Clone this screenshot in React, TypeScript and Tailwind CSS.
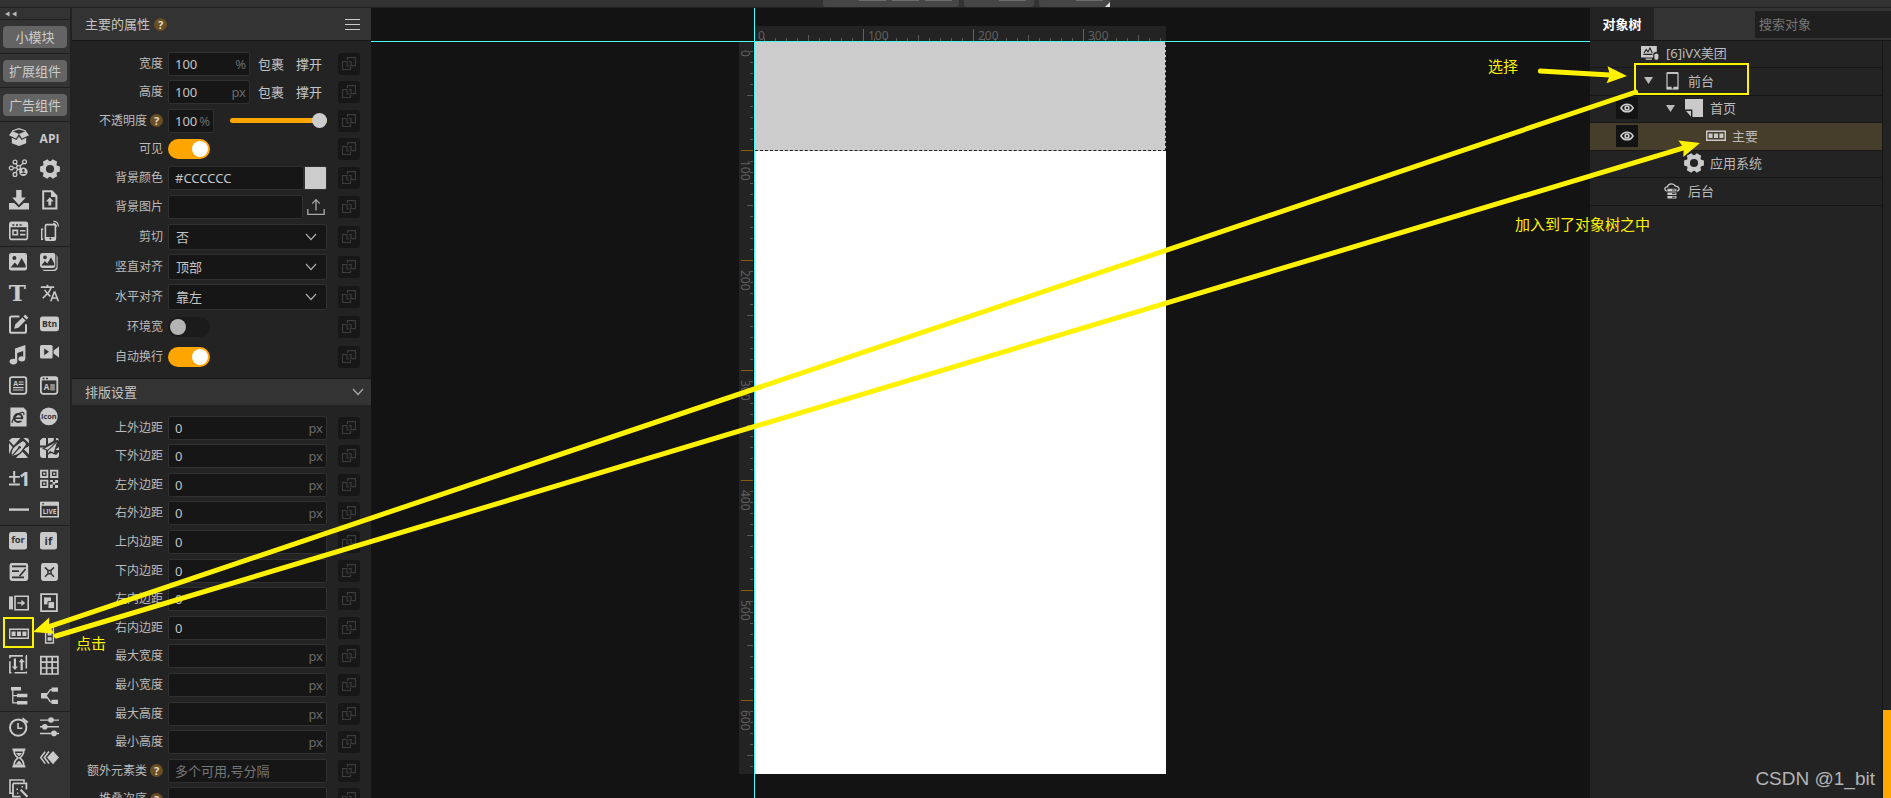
import React from "react";
import { MdTranslate } from "react-icons/md";

const L = "#cacaca";
const D = "#333333";

function Ico({ children }: { children: React.ReactNode }) {
  return (
    <svg viewBox="0 0 20 20" className="block size-5 overflow-visible" fill={L} aria-hidden="true">
      {children}
    </svg>
  );
}

function IcoText({ x, y, size, fill, children, serif }: { x: number; y: number; size: number; fill: string; children: string; serif?: boolean }) {
  return (
    <text x={x} y={y} fontSize={size} fontWeight="bold" fill={fill} textAnchor="middle" className={serif ? "font-['DejaVu_Serif',serif]" : "font-['Open_Sans',sans-serif]"}>
      {children}
    </text>
  );
}

function GearShape() {
  return (
    <g>
      <circle cx="10" cy="10" r="6" fill="none" stroke={L} strokeWidth="3.8" />
      {[30, 90, 150].map((a) => (
        <g key={a} transform={`rotate(${a} 10 10)`}>
          <path d="M6.600 3.400 7.400.100h5.200l.800 3.300zM6.600 16.600l.800 3.300h5.200l.800-3.300z" />
        </g>
      ))}
    </g>
  );
}

function RowShape() {
  return (
    <g>
      <path d="M.7 5.2h18.6v9H.7z" fill="none" stroke={L} strokeWidth="1.4" />
      <path d="M2.6 7.6h4v4.4h-4zM8 7.6h4v4.4H8zM13.4 7.6h4v4.4h-4z" />
    </g>
  );
}

const stroke = { fill: "none", stroke: L, strokeWidth: 1.6 } as const;
const dark = { fill: "none", stroke: D, strokeWidth: 1.4 } as const;

type Tool = { name: string; art: React.ReactNode };

const toolGroups: Tool[][] = [
  [
    { name: "模型", art: <Ico><path d="M0 7.200 3.200 3 10 6 7 10.400zM20 7.200 16.800 3 10 6l3 4.400z" /><path d="M3.200 3 10 .600 16.800 3" fill="none" stroke={L} strokeWidth="1.300" /><path d="M2.800 9.800 7.400 12 10 8.400l2.600 3.600 4.600-2.200v5.400L10 18l-7.200-2.800z" /></Ico> },
    { name: "API", art: <Ico><IcoText x={9.5} y={15} size={12} fill={L}>API</IcoText></Ico> },
    { name: "网络", art: <Ico><g {...stroke} strokeWidth="1.3"><circle cx="6" cy="3" r="1.9" /><circle cx="15.5" cy="2.8" r="1.9" /><circle cx="2.3" cy="9" r="1.9" /><circle cx="9.6" cy="8.6" r="1.9" /><circle cx="6" cy="15.4" r="1.9" /><path d="m7 4.6 1.6 2.4m2.4.1 3.2-2.8M4.2 8.9h3.5m1 1.4-1.8 3.4" /></g><circle cx="14.4" cy="12.8" r="4.2" /><circle cx="14.4" cy="11.4" r="1.3" fill={D} /><path d="M11.9 15c.6-2 4.4-2 5 0z" fill={D} /></Ico> },
    { name: "设置", art: <Ico><GearShape /></Ico> },
    { name: "下载", art: <Ico><path d="M7.2 0h5.4v7.6h4.2L9.9 15 3.2 7.6h4z" /><path d="M0 13h5.2l4.7 4.4 4.8-4.4H20v6.6H0z" /></Ico> },
    { name: "上传", art: <Ico><path d="M3.2 1.2h8.6l4.6 4.6v12.6H3.2z" fill="none" stroke={L} strokeWidth="2" /><path d="M11 .8 17 7h-6zM9.8 7.2l3.9 4.4h-2.5v4H8.4v-4H5.9z" /></Ico> },
    { name: "窗口", art: <Ico><rect x=".8" y="1.4" width="17.6" height="17" rx="2" {...stroke} /><path d="M1 2h17.2v4.2H1z" /><path d="M3.4 3.2h2v1.6h-2zM7 3.2h2v1.6H7zM10.6 3.2h2v1.6h-2z" fill={D} /><path d="M4 9.4h4.4v4.4H4z" {...stroke} /><path d="M11 9h5.4v1.6H11zM11 12.8h5.4v1.6H11z" /></Ico> },
    { name: "移动端", art: <Ico><rect x="5.4" y="3.6" width="10" height="15.6" rx="1.4" {...stroke} /><path d="M5.4 16h10v3h-10zM1 7.4h2.2v1.5h-.8v8.6h.8V19H1z" /><circle cx="10.4" cy="17.6" r="1" fill={D} /><path d="M13 2.6c2 0 3.4 1.4 3.4 3.4M13.4.4c3 0 5 2 5 5" {...stroke} strokeWidth="1.2" /></Ico> },
  ],
  [
    { name: "图片", art: <Ico><rect x="0" y="1" width="18" height="17.6" rx="2.4" /><circle cx="5.4" cy="6" r="2" fill={D} /><path d="m1.6 15.6 4.2-5.2 2.8 3 4-7.4 4 7v2.6z" fill={D} /></Ico> },
    { name: "图集", art: <Ico><rect x="0" y="1" width="15.4" height="15" rx="2.4" /><path d="M16 2.8c1 .6 1.6 1.6 1.6 2.8v10c0 2-1.4 3.4-3.4 3.4H5.4c-1.4 0-2.4-.6-3-1.6h10.4c2 0 3.2-1.2 3.2-3.2z" /><path d="M3 17.2h10.6c1.8 0 2.6-1 2.6-2.8V3" fill="none" stroke={D} strokeWidth=".8" /><circle cx="5" cy="5.4" r="1.8" fill={D} /><path d="m1.4 13.4 3.4-4.4 2.6 2.4L11 5.2l3.2 6v2.2z" fill={D} /></Ico> },
    { name: "文本", art: <Ico><IcoText x={8.2} y={18} size={23} fill={L} serif>T</IcoText></Ico> },
    { name: "翻译", art: <MdTranslate className="size-5 text-[#cacaca]" aria-hidden="true" /> },
    { name: "输入", art: <Ico><path d="M10.4 2.6H2.6c-1 0-1.6.6-1.6 1.6v13c0 1 .6 1.6 1.6 1.6h12.8c1 0 1.6-.6 1.6-1.6v-7" fill="none" stroke={L} strokeWidth="2" /><path d="m5.2 14.8 1-4.2 7.2-7.2 3.2 3.2-7.2 7.2zM14.4 2.4l1.8-1.8 3.2 3.2-1.8 1.8z" /></Ico> },
    { name: "按钮", art: <Ico><rect x="0" y="2.6" width="19" height="14.6" rx="2.4" /><IcoText x={9.5} y={13} size={8.6} fill={D}>Btn</IcoText></Ico> },
    { name: "音频", art: <Ico><path d="M6 3.4 16.4 0v13.6h-2.2V6L8.2 8v8.6H6z" /><ellipse cx="4.4" cy="16.6" rx="3.8" ry="2.8" /><ellipse cx="12.8" cy="13.8" rx="3.4" ry="2.6" /></Ico> },
    { name: "视频", art: <Ico><rect x="0" y="0" width="12.6" height="13.6" rx="1.6" /><path d="m13.6 5.4 5.4-4v11l-5.4-4z" /><path d="M4.2 3.4 9 6.8l-4.8 3.4z" fill={D} /></Ico> },
    { name: "富文本", art: <Ico><rect x=".9" y="1.2" width="16.4" height="16.6" rx="2.2" {...stroke} strokeWidth="1.8" /><IcoText x={6.6} y={10} size={7} fill={L}>A</IcoText><path d="M9.6 5.4h5v1.2h-5zM9.6 7.8h5V9h-5zM4 11h10.6v1.2H4zM4 13.4h10.6v1.2H4z" /></Ico> },
    { name: "文档", art: <Ico><rect x=".9" y="1.2" width="16.4" height="16.6" rx="2.2" {...stroke} strokeWidth="1.8" /><path d="M1 1h16.4v3.400H1z" /><path d="M2.6 1.800h2v1.400h-2zM6 1.800h2v1.400H6z" fill={D} /><IcoText x={6.4} y={14.400} size={8} fill={L}>A</IcoText><path d="M10.200 8h4.600v6.400h-4.600z" opacity=".6" /></Ico> },
    { name: "网页", art: <Ico><path d="M1.4.4h13.2l3 3.4v15.8H1.4z" /><circle cx="9.2" cy="11" r="4" fill="none" stroke={D} strokeWidth="2.2" /><path d="M5.6 10.4h7.8v1.6H5.6z" fill={D} /><path d="M11.2 12.2h4v1.6h-4z" fill={L} /><path d="M3.4 16c-1-2.6 3-8.4 8.6-10.4 3-.8 3.4.6 2.6 2.4" {...dark} strokeWidth="1.2" /></Ico> },
    { name: "图标", art: <Ico><circle cx="8.8" cy="9.4" r="8.9" /><IcoText x={8.8} y={12} size={7.4} fill={D}>Icon</IcoText></Ico> },
    { name: "绘图", art: <Ico><path d="M3 0h8.400L4.800 7.400 0 2.600zM0 5l3.800 4.200L0 16zM14.400 0H17c2 0 3 1 3 3v2.200zM20 8v8.600l-5.200-5.400zM13.200 13.600 19 19.400 17 20H6.800z" /><path d="M2.400 18.400C1.200 13.600 3 10 6.600 7.600l6.800-5.200c2.400.400 3.800 2 4.200 4.200l-4.400 6.200c-2.400 3.400-6 5.200-10.800 5.600z" fill={L} stroke={D} strokeWidth="1.200" /><path d="m3.400 17.400 6.800-7.600" {...dark} strokeWidth="1.300" /><circle cx="10.600" cy="9.200" r="1.300" fill={D} /></Ico> },
    { name: "地图", art: <Ico><path d="M2.600 0H6v7.600H0V2.600zM8 0h6l-.600 3L8 6zM16 0c2 0 3 1 3 3l-3-1zM0 9.600h4L6 12v8H3c-2 0-3-1-3-3zM19 9v3h-4zM8 16l4-1 4 2 3-3v3c0 2-1 3-3 3H8z" /><path d="M18 2.600 3.200 10.400l4.400 2v4.400l2.600-3.200 3.800 2z" fill={L} stroke={D} strokeWidth="1.100" /><path d="M16.600 4.200 7.800 12.400" {...dark} strokeWidth="1.100" /></Ico> },
    { name: "计数器", art: <Ico><path d="M4.2 2h2v5h4.6v1.8H6.2v5h-2v-5H0V7h4.2zM0 14.6h10.8v1.8H0z" /><IcoText x={15.6} y={17.4} size={20} fill={L}>1</IcoText></Ico> },
    { name: "二维码", art: <Ico><path d="M1 1.6h6.4V8H1zM11 1.6h6.4V8H11zM1 11.6h6.4V18H1z" fill="none" stroke={L} strokeWidth="1.8" /><path d="M3.2 3.8h2v2h-2zM13.2 3.8h2v2h-2zM3.2 13.8h2v2h-2zM10 11h3v2h-3zM15 11h3v3h-3zM12.6 13h2.6v2.6h-2.6zM10 15.6h2.8V19H10zM15 16h3v3h-3z" /></Ico> },
    { name: "横线", art: <Ico><path d="M0 8.4h20v2.4H0z" /></Ico> },
    { name: "直播", art: <Ico><path d="M.8 2.6h17.4v14.2H.8z" {...stroke} /><path d="M1 1.8h17v4H1z" /><path d="M2.4 3h1.4v1.4H2.4z" fill={D} /><IcoText x={9.6} y={14} size={6.6} fill={L}>LIVE</IcoText></Ico> },
  ],
  [
    { name: "循环", art: <Ico><rect x="0" y="1" width="18" height="17.6" rx="2.4" /><IcoText x={9} y={12.4} size={9.4} fill={D}>for</IcoText></Ico> },
    { name: "条件", art: <Ico><rect x="0" y="1" width="17" height="17.6" rx="2.4" /><IcoText x={8.4} y={13.6} size={11} fill={D}>if</IcoText></Ico> },
    { name: "表单", art: <Ico><rect x=".6" y="1" width="18.6" height="18" rx="2.4" /><path d="M3 4.4h14M3 9.2h7M3 15.4h12M10.6 14l6-7" {...dark} strokeWidth="1.7" /></Ico> },
    { name: "变量", art: <Ico><rect x="1" y="1" width="17" height="18" rx="2.4" /><path d="m5 5.4 3 3v3.4l-3 3M14 5.4l-3 3v3.4l3 3M8 8.4h3M8 11.8h3" {...dark} strokeWidth="1.5" /></Ico> },
    { name: "轮播", art: <Ico><path d="M0 3.4h4v13H0z" /><path d="M6 3.2h13.2v13.6H6z" {...stroke} /><path d="M8.4 9.2h4V6.8l3.8 3.2-3.8 3.2v-2.4h-4z" /></Ico> },
    { name: "叠层", art: <Ico><path d="M1.1 1.1h15.8v17H1.1z" {...stroke} strokeWidth="1.8" /><path d="M4 4.4h7v7H4z" /><path d="M8 8.6h6.6v7H8z" stroke={D} strokeWidth="1" /></Ico> },
    { name: "行", art: <Ico><RowShape /></Ico> },
    { name: "列", art: <Ico><path d="M5.6.8h7.8V19H5.6z" {...stroke} strokeWidth="1.4" /><path d="M7.6 2.8h4v3.6h-4zM7.6 8h4v3.6h-4zM7.6 13.2h4v3.6h-4z" /></Ico> },
    { name: "排序", art: <Ico><path d="M.9.9h16.4v16.8H.9z" {...stroke} strokeDasharray="13 3" /><path d="M4.8 3.4h2.2v8h2L5.9 15l-3-3.6h1.9zM11.6 15.2h2.2v-8h2L12.7 3.6l-3 3.6h1.9z" /></Ico> },
    { name: "表格", art: <Ico><path d="M.9 1.6h17V19H.9zM.9 7.2h17M.9 13h17M6.6 1.6V19M12.2 1.6V19" {...stroke} strokeWidth="1.7" /></Ico> },
    { name: "树", art: <Ico><path d="M2 1h10v3.4H2zM8 7.8h10.4v3.4H8zM8 15h10.4v3.4H8z" /><path d="M3.8 4v12.8H8M3.8 9.6H8" {...stroke} strokeWidth="1.3" /></Ico> },
    { name: "分支", art: <Ico><path d="M1 7h6v5.4H1zM11.6 1.6H18v4.2h-6.4zM11.6 13.8H18V18h-6.4z" /><path d="M12 3.6h-1.6L6 9.7l4.4 6.2H12" {...stroke} strokeWidth="1.4" /></Ico> },
  ],
  [
    { name: "定时器", art: <Ico><circle cx="9.2" cy="10.6" r="8.2" fill="none" stroke={L} strokeWidth="2" /><path d="M9 6v5.2h4.4" {...stroke} /><path d="m14 .4 5.4 4.4-1.4 1.6-5.2-4.4z" /></Ico> },
    { name: "滑块", art: <Ico><path d="M0 2.4h19v1.4H0zM0 9h19v1.4H0zM0 15.8h19v1.4H0z" /><circle cx="11" cy="3" r="2.8" /><circle cx="4.8" cy="9.7" r="2.8" /><circle cx="14" cy="16.4" r="2.8" /></Ico> },
    { name: "等待", art: <Ico><path d="M3.4.4h13v2.2h-13zM3.4 17.4h13v2.2h-13z" /><path d="M5 2.6c0 3.6 1 5 4 7.2-3 2.2-4 4-4 7.6h9.800c0-3.600-1-5.400-4-7.600 3-2.200 4-3.600 4-7.200z" {...stroke} /><path d="M7 5h6l-3 3.600zM6.600 16.400l3.400-4 3.400 4z" /></Ico> },
    { name: "动效", art: <Ico><path d="m13 3 6 6.600-6 6.600-6-6.600z" /><path d="M5.200 3.600.800 9.600l4.400 6M9 3.600 4.400 9.600 9 15.600" {...stroke} /></Ico> },
    { name: "素材", art: <Ico><path d="M3.600 14.200H1V1h14v2.400" {...stroke} /><path d="M4 4.400h13.400v6M11.600 17.600H4V4.400" {...stroke} strokeWidth="1.800" /><path d="m10.800 11.600 1.600-1.600 6.800 7-1.600 1.600z" /><path d="M7.400 9.400h1.600V11H7.400zM12.600 7h1.400v1.400h-1.400zM8 13.400h1.400v1.400H8z" /></Ico> },
  ],
];

function ToolColumn() {
  return (
    <aside className="flex w-[72px] shrink-0 flex-col overflow-hidden border-r-2 border-[#222] bg-[#333]">
      <button className="flex h-3 w-full shrink-0 items-center gap-[3px] border-b border-[#1f1f1f] pl-[5px]" aria-label="收起">
        <svg width="12" height="6" viewBox="0 0 12 6" fill="#bbb" aria-hidden="true"><path d="M0 3 4.500.500v5zM7 3l4.500-2.500v5z" /></svg>
      </button>
      {["小模块", "扩展组件", "广告组件"].map((t) => (
        <div key={t} className="flex h-[34px] shrink-0 items-center border-b border-[#1f1f1f] px-[3px]">
          <button className="h-[22px] w-full rounded-[4px] bg-[#646464] text-[13px] leading-[22px] text-[#ccc]">{t}</button>
        </div>
      ))}
      {toolGroups.map((g, i) => (
        <div key={i} className="-mb-px grid shrink-0 auto-rows-[31px] grid-cols-[31px_31px] border-b border-[#1f1f1f] pl-[9px] last:border-b-0">
          {g.map((t) => (
            <button key={t.name} title={t.name} className="flex items-center">{t.art}</button>
          ))}
        </div>
      ))}
    </aside>
  );
}

function Help() {
  return (
    <span className="flex size-[13px] shrink-0 items-center justify-center rounded-full bg-[#6a4f24] text-[11px] font-bold leading-[13px] text-[#e6dccb]">?</span>
  );
}

function LinkButton() {
  return (
    <button className="flex size-[22px] shrink-0 items-center justify-center rounded-[3px] bg-[#171717]" aria-label="绑定数据">
      <svg width="14" height="14" viewBox="0 0 14 14" fill="none" stroke="#3c3c3c" strokeWidth="1.200" aria-hidden="true">
        <path d="M8.500 9.500v3h-8v-8h4M5 4v5h2.500" />
        <path d="M5.500 3V.600h8v8H9.500M9 9V4.500H6.800" />
      </svg>
    </button>
  );
}

function Chevron({ className }: { className: string }) {
  return (
    <svg width="12" height="8" viewBox="0 0 12 8" fill="none" stroke="#aaa" strokeWidth="1.200" className={className} aria-hidden="true">
      <path d="m1 1 5 5.500L11 1" />
    </svg>
  );
}

function Row({ label, id, help, height, children }: { label: string; id: string; help?: boolean; height?: string; children: React.ReactNode }) {
  return (
    <div className={`flex shrink-0 items-center ${height ?? ""}`}>
      <div className="flex w-[91px] shrink-0 items-center justify-end gap-[3px]">
        <label htmlFor={id} className="whitespace-nowrap text-[12px] leading-4 text-[#bbb]">{label}</label>
        {help && <Help />}
      </div>
      <div className="ml-[5px] mr-[11px] flex w-[159px] shrink-0 items-center">{children}</div>
      <LinkButton />
    </div>
  );
}

function Field({ id, value, unit, width, placeholder }: { id: string; value?: string; unit?: string; width: string; placeholder?: string }) {
  return (
    <div className={`flex h-6 items-center rounded-[2px] border border-[#303030] bg-[#161616] pl-[6px] pr-[3px] text-[13px] leading-5 ${width}`}>
      <input id={id} defaultValue={value} placeholder={placeholder} className="w-full min-w-0 flex-1 bg-transparent text-[#c4c4c4] outline-none placeholder:text-[#777]" />
      {unit && <span className="text-[#6a6a6a]">{unit}</span>}
    </div>
  );
}

function Choice({ id, value }: { id: string; value: string }) {
  return (
    <div className="flex w-full items-center">
      <select id={id} defaultValue={value} className="h-[26px] w-full appearance-none rounded-[2px] border border-[#303030] bg-[#161616] pl-[7px] text-[13px] leading-5 text-[#c4c4c4] outline-none">
        <option>{value}</option>
      </select>
      <Chevron className="pointer-events-none -ml-[22px] shrink-0" />
    </div>
  );
}

function Toggle({ id, on }: { id: string; on?: boolean }) {
  return (
    <input
      id={id}
      type="checkbox"
      role="switch"
      defaultChecked={on}
      className="flex h-5 w-[42px] appearance-none items-center rounded-full bg-[#1b1b1b] px-[2px] before:block before:size-4 before:rounded-full before:bg-[#b4b4b4] checked:justify-end checked:bg-[#ffa500] checked:before:bg-white"
    />
  );
}

function SizeWords() {
  return (
    <div className="ml-2 flex shrink-0 gap-3 whitespace-nowrap text-[13px] leading-5 text-[#c4c4c4]">
      <button>包裹</button>
      <button>撑开</button>
    </div>
  );
}

const spacing: { label: string; value?: string; unit?: string; placeholder?: string; help?: boolean }[] = [
  { label: "上外边距", value: "0", unit: "px" },
  { label: "下外边距", value: "0", unit: "px" },
  { label: "左外边距", value: "0", unit: "px" },
  { label: "右外边距", value: "0", unit: "px" },
  { label: "上内边距", value: "0" },
  { label: "下内边距", value: "0" },
  { label: "左内边距", value: "0" },
  { label: "右内边距", value: "0" },
  { label: "最大宽度", unit: "px" },
  { label: "最小宽度", unit: "px" },
  { label: "最大高度", unit: "px" },
  { label: "最小高度", unit: "px" },
  { label: "额外元素类", placeholder: "多个可用,号分隔", help: true },
  { label: "堆叠次序", help: true },
];

function Properties() {
  return (
    <section className="flex w-[299px] shrink-0 flex-col overflow-hidden bg-[#232323]">
      <header className="flex h-[33px] shrink-0 items-center border-b border-[#161616] bg-[#333] pl-[13px] pr-[11px]">
        <h2 className="mr-1 text-[13px] leading-5 text-[#c4c4c4]">主要的属性</h2>
        <Help />
        <button className="ml-auto flex w-[15px] flex-col gap-1" aria-label="菜单">
          <span className="h-px w-full bg-[#ccc]" />
          <span className="h-px w-full bg-[#ccc]" />
          <span className="h-px w-full bg-[#ccc]" />
        </button>
      </header>
      <div className="flex shrink-0 flex-col pb-[7px] pt-2">
        <Row label="宽度" id="width" height="h-[29px]"><Field id="width" value="100" unit="%" width="w-[82px] shrink-0" /><SizeWords /></Row>
        <Row label="高度" id="height" height="h-[28px]"><Field id="height" value="100" unit="px" width="w-[82px] shrink-0" /><SizeWords /></Row>
        <Row label="不透明度" id="opacity" help height="h-[29px]">
          <Field id="opacity" value="100" unit="%" width="w-[46px] shrink-0" />
          <input
            type="range"
            defaultValue={100}
            aria-label="不透明度"
            className="ml-4 h-4 w-[97px] appearance-none bg-transparent [&::-webkit-slider-runnable-track]:h-[5px] [&::-webkit-slider-runnable-track]:rounded-full [&::-webkit-slider-runnable-track]:bg-[#ffa500] [&::-webkit-slider-thumb]:-mt-[5px] [&::-webkit-slider-thumb]:size-[15px] [&::-webkit-slider-thumb]:appearance-none [&::-webkit-slider-thumb]:rounded-full [&::-webkit-slider-thumb]:bg-[#ccc]"
          />
        </Row>
        <Row label="可见" id="visible" height="h-[28px]"><Toggle id="visible" on /></Row>
        <Row label="背景颜色" id="bgcolor" height="h-[29px]">
          <Field id="bgcolor" value="#CCCCCC" width="w-[136px] shrink-0" />
          <button className="h-6 w-[23px] shrink-0 rounded-r-[2px] border border-[#303030] bg-[#ccc]" aria-label="选择颜色" />
        </Row>
        <Row label="背景图片" id="bgimage" height="h-[29px]">
          <Field id="bgimage" width="w-[135px] shrink-0" />
          <button className="ml-1" aria-label="上传图片">
            <svg width="18" height="18" viewBox="0 0 18 18" fill="none" stroke="#a8a8a8" strokeWidth="1.300" aria-hidden="true">
              <path d="M.800 11v5.400h16.400V11M9 12.500V2M5.200 5.600 9 1.600l3.800 4" />
            </svg>
          </button>
        </Row>
        <Row label="剪切" id="clip" height="h-[31px]"><Choice id="clip" value="否" /></Row>
        <Row label="竖直对齐" id="valign" height="h-[30px]"><Choice id="valign" value="顶部" /></Row>
        <Row label="水平对齐" id="halign" height="h-[30px]"><Choice id="halign" value="靠左" /></Row>
        <Row label="环境宽" id="envwidth" height="h-[30px]"><Toggle id="envwidth" /></Row>
        <Row label="自动换行" id="wrap" height="h-[29px]"><Toggle id="wrap" on /></Row>
      </div>
      <header className="flex h-[27px] shrink-0 items-center justify-between border-t border-[#161616] bg-[#333] pl-[13px] pr-[7px]">
        <h2 className="text-[13px] leading-5 text-[#c4c4c4]">排版设置</h2>
        <Chevron className="shrink-0" />
      </header>
      <div className="flex flex-col overflow-hidden pt-[8px] *:h-[29px] [&>*:nth-child(5n+2)]:h-[28px] [&>*:nth-child(5n+4)]:h-[28px]">
        {spacing.map((s) => (
          <Row key={s.label} label={s.label} id={s.label} help={s.help}>
            <Field id={s.label} value={s.value} unit={s.unit} placeholder={s.placeholder} width="w-full" />
          </Row>
        ))}
      </div>
    </section>
  );
}

function TopRuler() {
  return (
    <svg className="block h-4 w-full overflow-visible bg-[#232323]" aria-hidden="true">
      {Array.from({ length: 37 }, (_, i) => i + 1).map((i) => {
        const len = i % 10 === 0 ? 12 : i % 5 === 0 ? 6 : 3;
        return <rect key={i} x={i * 11 - 1} y={15 - len} width="1" height={len} fill={i % 10 === 0 ? "#8a5d12" : "#5a5a5a"} />;
      })}
      {[0, 100, 200, 300].map((v) => (
        <text key={v} x={v * 1.1 + 4} y="14" fontSize="12" fill="#5f5f5f">{v}</text>
      ))}
    </svg>
  );
}

function SideRuler() {
  return (
    <svg className="block h-full w-[14px] overflow-visible bg-[#232323]" aria-hidden="true">
      {Array.from({ length: 66 }, (_, i) => i + 1).map((i) => {
        const len = i % 10 === 0 ? 12 : i % 5 === 0 ? 6 : 3;
        return <rect key={i} x={14 - len} y={i * 11 - 2} width={len} height="1" fill={i % 10 === 0 ? "#8a5d12" : "#5a5a5a"} />;
      })}
      {[0, 100, 200, 300, 400, 500, 600].map((v) => (
        <text key={v} transform={`translate(2 ${v * 1.1 + 8}) rotate(90)`} fontSize="12" fill="#5f5f5f">{v}</text>
      ))}
    </svg>
  );
}

function Stage() {
  return (
    <main className="relative flex min-w-0 flex-1 justify-center overflow-hidden bg-[#131313] pb-6 pr-14 pt-[18px]">
      <div className="relative grid grid-cols-[16px_411px] grid-rows-[16px_1fr]">
        <div className="col-start-2 -ml-px"><TopRuler /></div>
        <div className="col-start-1 row-start-2"><SideRuler /></div>
        <div className="col-start-2 row-start-2 bg-white">
          <div className="h-[109px] border-b border-r border-dashed border-[#222] bg-[#ccc]" />
        </div>
        <div className="absolute -top-[18px] left-[15px] h-screen w-px bg-[#44ffff]" />
      </div>
      <div className="absolute inset-x-0 top-[33px] h-px bg-[#44ffff]" />
    </main>
  );
}

const indent = ["w-0", "w-[22px]", "w-[44px]", "w-[66px]"];

const tree: { name: string; depth: number; open?: boolean; eye?: boolean; active?: boolean; art: React.ReactNode }[] = [
  { name: "[6]iVX美团", depth: 0, art: <svg width="18" height="16" viewBox="0 0 18 16" fill={L} aria-hidden="true"><path d="M0 1h15.800v6h-1c-1.600 0-2.600 1-2.600 2.600v3H0zM4.600 13.400h6.400v1.400H4.600z" /><path d="M2.400 9.400h9M3 8l2.200-3.600L7 7l2-4 2.200 5" fill="none" stroke="#222" strokeWidth="1.100" /><rect x="13.400" y="8.400" width="4" height="6.400" rx="1.900" /></svg> },
  { name: "前台", depth: 1, open: true, art: <svg width="13" height="18" viewBox="0 0 13 18" fill="none" stroke={L} strokeWidth="1.200" aria-hidden="true"><path d="M1 1h11v16H1z" /><path d="M1 16h4.600m1.800 0H12" strokeWidth="2.600" /><path d="M1 1h11" strokeWidth="1.800" /></svg> },
  { name: "首页", depth: 2, open: true, eye: true, art: <svg width="18" height="18" viewBox="0 0 18 18" fill={L} aria-hidden="true"><path d="M0 0h18v18H7.400V10.600H0zM1 12l5 5.600V12z" /></svg> },
  { name: "主要", depth: 3, eye: true, active: true, art: <Ico><RowShape /></Ico> },
  { name: "应用系统", depth: 2, art: <Ico><GearShape /></Ico> },
  { name: "后台", depth: 1, art: <svg width="16" height="16" viewBox="0 0 16 16" fill={L} aria-hidden="true"><path d="M3 8.200C0 7.600.200 3.800 3.400 3.800 4.400.200 10 0 11.400 3.200c4-.400 4.800 4.200 1.600 5" fill="none" stroke={L} strokeWidth="1.300" /><path d="M3.400 5.800h9v2.600h-9zM3.400 9.400h9V12h-9zM3.400 13h9v2.600h-9z" /><path d="M8 7h3.400M8 10.600h3.400M8 14.200h3.400" stroke="#232323" strokeWidth=".900" /></svg> },
];

function ObjectTree() {
  return (
    <aside className="flex w-[301px] shrink-0 flex-col bg-[#232323]">
      <header className="flex h-[33px] shrink-0 items-center border-b border-[#161616] bg-[#333]">
        <button className="h-full w-16 bg-[#232323] text-[13px] font-bold leading-5 text-white">对象树</button>
        <input aria-label="搜索对象" placeholder="搜索对象" className="ml-auto h-[27px] w-[136px] bg-[#1f1f1f] pl-1 text-[13px] leading-5 text-[#ccc] outline-none placeholder:text-[#777]" />
      </header>
      <div className="flex min-h-0 flex-1">
        <ul className="min-w-0 flex-1 border-r border-[#161616] *:h-[27px] [&>*:nth-child(even)]:h-[28px]">
          {tree.map((n) => (
            <li key={n.name} className={`flex items-center border-b border-[#161616] pb-[2px] ${n.active ? "bg-[#473d2b]" : ""}`}>
              <div className="flex w-12 shrink-0 justify-end">
                {n.eye && (
                  <button className="flex size-[22px] items-center justify-center bg-[#131313]" aria-label="显示或隐藏">
                    <svg width="14" height="10" viewBox="0 0 14 10" fill="none" stroke="#ccc" aria-hidden="true"><path d="M1 5c2.800-5 9.200-5 12 0-2.800 5-9.200 5-12 0z" strokeWidth="1.700" /><circle cx="7" cy="5" r="1.900" strokeWidth="1.600" /></svg>
                  </button>
                )}
              </div>
              <div className={`flex shrink-0 justify-end ${indent[n.depth]}`}>
                {n.open && <svg width="9" height="7" viewBox="0 0 9 7" fill="#bbb" className="mr-[7px]" aria-hidden="true"><path d="M0 0h9L4.500 7z" /></svg>}
              </div>
              <div className="mr-1 flex w-6 shrink-0 items-center justify-center">{n.art}</div>
              <span className="text-[13px] leading-5 text-[#bbb]">{n.name}</span>
            </li>
          ))}
        </ul>
        <div className="flex w-2 flex-col justify-end">
          <div className="h-[88px] bg-[#ffa800]" />
        </div>
      </div>
    </aside>
  );
}

function Arrow({ x1, y1, x2, y2 }: { x1: number; y1: number; x2: number; y2: number }) {
  const angle = (Math.atan2(y2 - y1, x2 - x1) * 180) / Math.PI;
  const len = Math.hypot(x2 - x1, y2 - y1);
  return (
    <g transform={`translate(${x1} ${y1}) rotate(${angle})`}>
      <rect x="-2" y="-2.500" width={len - 13} height="5" rx="2" />
      <path d={`M${len} 0 ${len - 20}-8.500 ${len - 17} 0 ${len - 20} 8.500z`} />
    </g>
  );
}

function Annotations() {
  return (
    <svg className="pointer-events-none absolute inset-0 size-full" fill="#fff200" aria-hidden="true">
      <Arrow x1={1636} y1={92} x2={33} y2={632} />
      <Arrow x1={56} y1={636} x2={1700} y2={143} />
      <Arrow x1={1540} y1={71} x2={1627} y2={76} />
      <g fill="none" stroke="#fff200" strokeWidth="2">
        <rect x="4" y="618" width="29" height="29" />
        <rect x="1635" y="64" width="113" height="30" />
      </g>
      <g fontSize="15">
        <text x="1488" y="72">选择</text>
        <text x="76" y="649">点击</text>
        <text x="1515" y="230">加入到了对象树之中</text>
      </g>
    </svg>
  );
}

function TopBar() {
  const bar = "h-px w-[27px] bg-[#6c6c6c]";
  return (
    <div className="flex h-2 shrink-0 justify-center gap-[5px] border-b border-[#222] bg-[#333] pl-[41px]">
      <div className="flex w-[136px] justify-end gap-[6px] rounded-b-[3px] bg-[#464646] pr-[7px]"><span className={bar} /><span className={bar} /><span className={bar} /></div>
      <div className="flex w-[70px] justify-end rounded-b-[3px] bg-[#464646] pr-2"><span className={bar} /></div>
      <div className="flex w-[71px] items-start justify-end gap-[2px] rounded-bl-[3px] bg-[#464646]">
        <span className={bar} />
        <svg width="5" height="5" className="self-end" aria-hidden="true"><path d="M5 0v5H0z" fill="#ddd" /></svg>
      </div>
    </div>
  );
}

export default function App() {
  return (
    <div className="relative flex h-screen flex-col overflow-hidden bg-[#131313] font-['Noto_Sans','Noto_Sans_CJK_SC',sans-serif]">
      <TopBar />
      <div className="flex min-h-0 flex-1">
        <ToolColumn />
        <Properties />
        <Stage />
        <ObjectTree />
      </div>
      <Annotations />
      <p className="absolute bottom-[7px] right-4 font-['Liberation_Sans',sans-serif] text-[19px] leading-6 text-[#b4b4b4]">CSDN @1_bit</p>
    </div>
  );
}
